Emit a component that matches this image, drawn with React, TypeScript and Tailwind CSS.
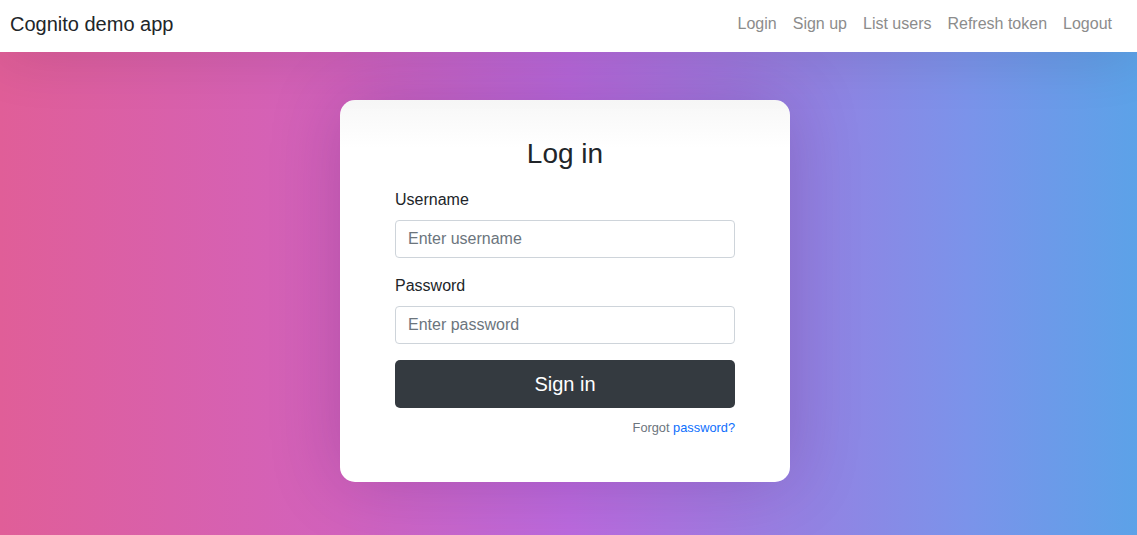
import React from "react";

export default function App() {
  return (
    <div className="min-h-[535px] h-[535px] flex flex-col font-['Liberation_Sans',Arial,sans-serif] overflow-hidden">
      <nav className="relative z-10 h-[52px] shrink-0 bg-white flex items-center justify-between pl-[10px] pr-[25px] pb-[4px] shadow-[0_4px_60px_rgba(0,0,0,0.12)]">
        <span className="text-[20px] text-[#212529] leading-[30px]">Cognito demo app</span>
        <div className="flex items-center gap-[16px] text-[16px] text-[#8c8c8c]">
          <a>Login</a>
          <a>Sign up</a>
          <a>List users</a>
          <a>Refresh token</a>
          <a>Logout</a>
        </div>
      </nav>
      <main className="flex-1 flex justify-center pt-[48px] bg-[linear-gradient(to_right,#e05e98_0%,#d262bd_30%,#bb6ade_50%,#9283e3_72%,#7b93ea_85%,#5ca2e8_100%)]">
        <div className="mr-[7px] w-[450px] h-[382px] rounded-[15px] shadow-[0_0_70px_rgba(60,20,80,0.22)] bg-[linear-gradient(to_bottom,#f7f7f7_0px,#ffffff_48px)] px-[55px] pt-[37px]">
          <h1 className="text-[28px] leading-[34px] text-center text-[#212529] mb-[17px]">Log in</h1>
          <label className="block text-[16px] leading-[24px] text-[#212529] mb-[8px]">Username</label>
          <input
            className="block w-full h-[38px] border border-[#ced4da] rounded-[4px] px-[12px] text-[16px] text-[#212529] placeholder:text-[#6c757d] bg-white outline-none mb-[16px]"
            placeholder="Enter username"
          />
          <label className="block text-[16px] leading-[24px] text-[#212529] mb-[8px]">Password</label>
          <input
            type="password"
            className="block w-full h-[38px] border border-[#ced4da] rounded-[4px] px-[12px] text-[16px] text-[#212529] placeholder:text-[#6c757d] bg-white outline-none mb-[16px]"
            placeholder="Enter password"
          />
          <button className="block w-full h-[48px] rounded-[5px] bg-[#343a40] text-white text-[20px]">Sign in</button>
          <p className="text-right text-[12.8px] mt-[10px] text-[#6c757d]">
            Forgot <a className="text-[#0d6efd]">password?</a>
          </p>
        </div>
      </main>
    </div>
  );
}
